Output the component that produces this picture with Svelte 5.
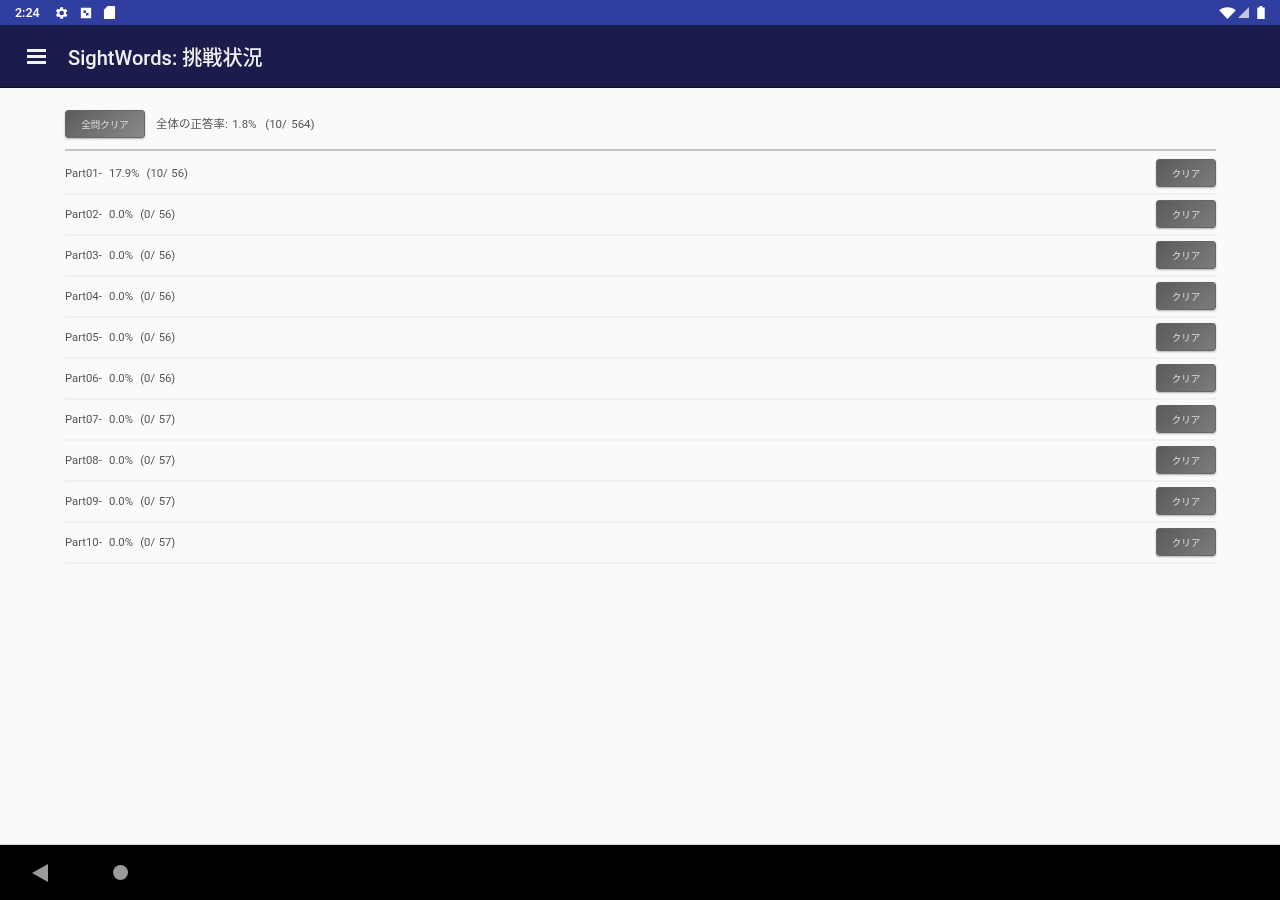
<script>
  const parts = [
    { name: "Part01", rate: "17.9%", done: 10, total: 56 },
    { name: "Part02", rate: "0.0%", done: 0, total: 56 },
    { name: "Part03", rate: "0.0%", done: 0, total: 56 },
    { name: "Part04", rate: "0.0%", done: 0, total: 56 },
    { name: "Part05", rate: "0.0%", done: 0, total: 56 },
    { name: "Part06", rate: "0.0%", done: 0, total: 56 },
    { name: "Part07", rate: "0.0%", done: 0, total: 57 },
    { name: "Part08", rate: "0.0%", done: 0, total: 57 },
    { name: "Part09", rate: "0.0%", done: 0, total: 57 },
    { name: "Part10", rate: "0.0%", done: 0, total: 57 },
  ];
</script>

<main class="screen">
  <div class="status">
    <div class="status-left">
      <span class="time">2:24</span>
      <svg class="ic" viewBox="0 0 24 24" width="16" height="16">
        <path
          fill="#fff"
          d="M19.4 13a7.500 7.500 0 0 0 0-2l2.100-1.600-2-3.500-2.500 1a7.500 7.500 0 0 0-1.700-1L15 3.200h-4l-.4 2.700a7.500 7.500 0 0 0-1.700 1l-2.500-1-2 3.500L6.600 11a7.500 7.500 0 0 0 0 2l-2.200 1.600 2 3.500 2.500-1a7.500 7.500 0 0 0 1.700 1l.4 2.700h4l.4-2.700a7.500 7.500 0 0 0 1.700-1l2.500 1 2-3.500zM13 15.500a3.500 3.500 0 1 1 0-7 3.500 3.500 0 0 1 0 7z"
        />
      </svg>
      <svg class="ic" viewBox="0 0 14 14" width="12" height="12">
        <path fill="#fff" fill-rule="evenodd" d="M1 1h12v12H1zM4 4v3h3V4zm3 3v3h3V7z" />
      </svg>
      <svg class="ic" viewBox="0 0 14 16" width="13" height="15">
        <path fill="#fff" d="M5 1h7a1 1 0 0 1 1 1v12a1 1 0 0 1-1 1H2a1 1 0 0 1-1-1V5z" />
      </svg>
    </div>
    <div class="status-right">
      <svg viewBox="0 0 18 13" width="17" height="12">
        <path fill="#fff" d="M0 3.500C4.800-.8 13.200-.8 18 3.500L9 13z" />
      </svg>
      <svg class="signal" viewBox="0 0 12 12" width="11" height="11">
        <path fill="#fff" opacity="0.7" d="M12 0v12H0z" />
      </svg>
      <svg viewBox="0 0 8 14" width="8" height="13">
        <path fill="#fff" d="M2.500 0h3v1.500H8V14H0V1.500h2.500z" />
      </svg>
    </div>
  </div>

  <header class="toolbar">
    <div class="menu"><span></span><span></span><span></span></div>
    <h1>SightWords: 挑戦状況</h1>
  </header>

  <section class="content">
    <div class="summary">
      <button class="btn btn-all"><span>全問クリア</span></button>
      <span class="label total">全体の正答率: 1.8%  (10/ 564)</span>
    </div>
    <ul class="rows">
      {#each parts as part}
        <li class="row">
          <span class="label">{part.name}-  {part.rate}  ({part.done}/ {part.total})</span>
          <button class="btn btn-row"><span>クリア</span></button>
        </li>
      {/each}
    </ul>
  </section>

  <nav class="navbar">
    <svg viewBox="0 0 16 18" width="16" height="18">
      <path fill="#9a9a9a" d="M16 0v18L0 9z" />
    </svg>
    <span class="home"></span>
  </nav>
</main>

<style>
  :global(body) {
    margin: 0;
    background: #fafafa;
  }

  .screen {
    width: 1280px;
    height: 900px;
    display: flex;
    flex-direction: column;
    font-family: "Roboto", "Noto Sans CJK JP", sans-serif;
    overflow: hidden;
  }

  .status {
    height: 25px;
    flex: none;
    background: #303f9f;
    display: flex;
    align-items: center;
    justify-content: space-between;
    padding: 0 15px 0 15px;
    box-sizing: border-box;
  }

  .status-left,
  .status-right {
    display: flex;
    align-items: center;
    filter: blur(0.5px);
  }

  .status-left {
    gap: 11px;
  }

  .status-right {
    gap: 2px;
  }

  .signal {
    margin-right: 6px;
  }

  .time {
    color: #fff;
    font-size: 12.500px;
    font-weight: 500;
    width: 27px;
  }

  .ic {
    display: block;
  }

  .toolbar {
    height: 63px;
    flex: none;
    background: #1a1c4b;
    display: flex;
    align-items: center;
    padding: 0 0 0 27px;
    gap: 22px;
    box-sizing: border-box;
    border-bottom: 1px solid #0f1030;
  }

  .menu {
    width: 19px;
    display: flex;
    flex-direction: column;
    gap: 3px;
  }

  .menu span {
    height: 3px;
    background: #f2f2f2;
  }

  h1 {
    margin: 0;
    color: #f0f0f0;
    font-size: 20.100px;
    font-weight: 500;
    filter: blur(0.6px);
  }

  .content {
    flex: 1;
    background: #fafafa;
    padding: 22px 64px 0 65px;
  }

  .summary {
    display: flex;
    align-items: center;
    gap: 11px;
    height: 28px;
    padding-bottom: 11px;
    border-bottom: 2px solid #c4c4c4;
  }

  .label {
    display: inline-block;
    font-size: 11.300px;
    word-spacing: 0.8px;
    color: #555;
    white-space: pre;
    filter: blur(0.6px);
  }

  .total {
    margin-top: -2px;
    font-size: 11.500px;
    word-spacing: 1.500px;
  }

  .rows {
    list-style: none;
    margin: 3px 0 0;
    padding: 0;
  }

  .row {
    height: 41px;
    box-sizing: border-box;
    display: flex;
    align-items: center;
    justify-content: space-between;
    border-bottom: 2px solid #f1f1f1;
  }

  .btn {
    height: 28px;
    padding: 0;
    border: 1px solid #666;
    border-radius: 3px;
    background: linear-gradient(135deg, #5c5c5c, #8a8a8a);
    color: #ddd;
    font-family: inherit;
    font-size: 9.500px;
    box-shadow: 0 1px 2px rgba(0, 0, 0, 0.3);
  }

  .btn span {
    display: inline-block;
    filter: blur(0.6px);
  }

  .btn-all {
    width: 80px;
  }

  .btn-row {
    width: 60px;
    margin-top: -2px;
    background: linear-gradient(135deg, #5a5a5a, #7c7c7c);
  }

  .navbar {
    height: 56px;
    flex: none;
    background: #000;
    border-top: 1px solid #d8d8d8;
    box-sizing: border-box;
    display: flex;
    align-items: center;
    padding: 0 0 0 32px;
    gap: 65px;
    filter: blur(0.5px);
  }

  .home {
    width: 15px;
    height: 15px;
    border-radius: 50%;
    background: #9a9a9a;
  }
</style>
